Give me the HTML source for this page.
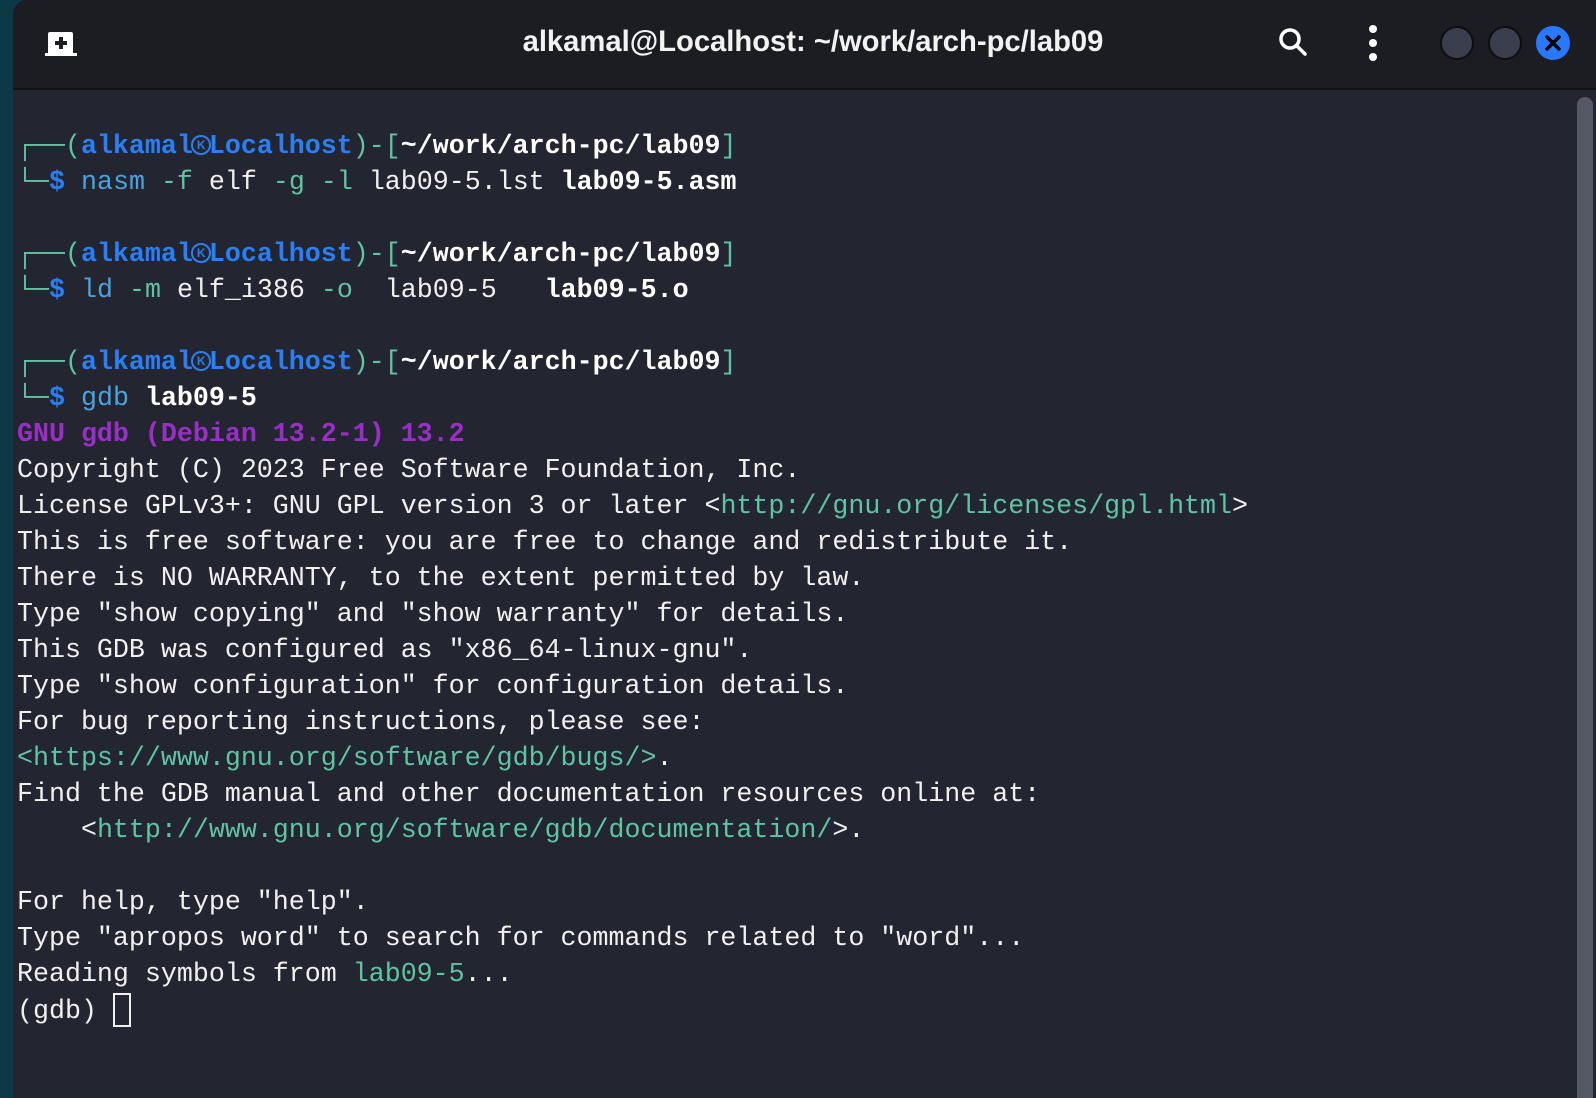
<!DOCTYPE html>
<html><head><meta charset="utf-8"><style>
html,body{margin:0;padding:0;width:1596px;height:1098px;overflow:hidden;background:#0b3a46;}
.win{position:absolute;left:13px;top:0;width:1583px;height:1098px;background:#232631;border-top-left-radius:14px;overflow:hidden;}
.hdr{position:absolute;left:0;top:0;width:100%;height:88px;background:#1b1d23;border-bottom:2px solid #111216;}
.title{position:absolute;left:0;width:1600px;top:26px;text-align:center;color:#f2f2f2;font:bold 29.2px "Liberation Sans",sans-serif;}
.term{position:absolute;left:4px;top:129px;margin:0;font:26.65px/36px "Liberation Mono","DejaVu Sans Mono",monospace;color:#f0f0f0;white-space:pre;}
.t{color:#5ec4a4}.u{color:#2a7ff5;font-weight:bold}.b{font-weight:bold;color:#fff}.c{color:#4aa3df}.o{color:#5ec4a4}
.p{color:#9a2fc8;font-weight:bold}.l{color:#5ec4a4}
.k{display:inline-block;width:20px;height:20px;margin:0 -2px;box-sizing:border-box;border:2px solid #2a7ff5;border-radius:50%;vertical-align:-2px;position:relative;}
.k:after{content:"K";position:absolute;left:4px;top:1px;font:bold 12px "Liberation Sans",sans-serif;color:#2a7ff5;}
.sb{position:absolute;left:1564px;top:97px;width:16px;height:1010px;background:#555865;border-radius:8px;}
.cur{display:inline-block;width:18px;height:34px;border:2px solid #f0f0f0;box-sizing:border-box;vertical-align:-9px;}
.circ{position:absolute;top:26px;width:34px;height:34px;border-radius:50%;background:#3b3e4d;border:2px solid #0d0e11;box-sizing:border-box;}
</style></head><body>
<div class="win">
<div class="hdr">
<svg style="position:absolute;left:32px;top:32px" width="32" height="24" viewBox="0 0 32 24"><path d="M5 0h21a2 2 0 0 1 2 2v19h4v3H0v-3h3V2a2 2 0 0 1 2-2z" fill="#fff"/><path d="M14 5h4v4h4v4h-4v4h-4v-4h-4V9h4z" fill="#1b1d23"/></svg>
<div class="title">alkamal@Localhost: ~/work/arch-pc/lab09</div>
<svg style="position:absolute;left:1265px;top:27px" width="32" height="32" viewBox="0 0 32 32"><circle cx="12" cy="12" r="9" fill="none" stroke="#fff" stroke-width="3.5"/><path d="M19 19l8 8" stroke="#fff" stroke-width="3.5" stroke-linecap="round"/></svg>
<svg style="position:absolute;left:1353px;top:24px" width="14" height="38"><circle cx="7" cy="5" r="4" fill="#fff"/><circle cx="7" cy="19" r="4" fill="#fff"/><circle cx="7" cy="33" r="4" fill="#fff"/></svg>
<div class="circ" style="left:1427px"></div>
<div class="circ" style="left:1475px"></div>
<div class="circ" style="left:1523px;background:#2979ff;border-color:#2979ff"></div>
<svg style="position:absolute;left:1530px;top:33px" width="20" height="20"><path d="M4 4l12 12M16 4L4 16" stroke="#000" stroke-width="3.5" stroke-linecap="round"/></svg>
</div>
<pre class="term"><span class="t">┌──(</span><span class="u">alkamal<span class="k"></span>Localhost</span><span class="t">)-[</span><span class="b">~/work/arch-pc/lab09</span><span class="t">]</span>
<span class="t">└─</span><span class="u">$</span> <span class="c">nasm</span> <span class="o">-f</span> elf <span class="o">-g</span> <span class="o">-l</span> lab09-5.lst <span class="b">lab09-5.asm</span>

<span class="t">┌──(</span><span class="u">alkamal<span class="k"></span>Localhost</span><span class="t">)-[</span><span class="b">~/work/arch-pc/lab09</span><span class="t">]</span>
<span class="t">└─</span><span class="u">$</span> <span class="c">ld</span> <span class="o">-m</span> elf_i386 <span class="o">-o</span>  lab09-5   <span class="b">lab09-5.o</span>

<span class="t">┌──(</span><span class="u">alkamal<span class="k"></span>Localhost</span><span class="t">)-[</span><span class="b">~/work/arch-pc/lab09</span><span class="t">]</span>
<span class="t">└─</span><span class="u">$</span> <span class="c">gdb</span> <span class="b">lab09-5</span>
<span class="p">GNU gdb (Debian 13.2-1) 13.2</span>
Copyright (C) 2023 Free Software Foundation, Inc.
License GPLv3+: GNU GPL version 3 or later &lt;<span class="l">http://gnu.org/licenses/gpl.html</span>&gt;
This is free software: you are free to change and redistribute it.
There is NO WARRANTY, to the extent permitted by law.
Type "show copying" and "show warranty" for details.
This GDB was configured as "x86_64-linux-gnu".
Type "show configuration" for configuration details.
For bug reporting instructions, please see:
<span class="l">&lt;https://www.gnu.org/software/gdb/bugs/&gt;</span>.
Find the GDB manual and other documentation resources online at:
    &lt;<span class="l">http://www.gnu.org/software/gdb/documentation/</span>&gt;.

For help, type "help".
Type "apropos word" to search for commands related to "word"...
Reading symbols from <span class="l">lab09-5</span>...
(gdb) <span class="cur"></span></pre>
<div class="sb"></div>
</div>
</body></html>
